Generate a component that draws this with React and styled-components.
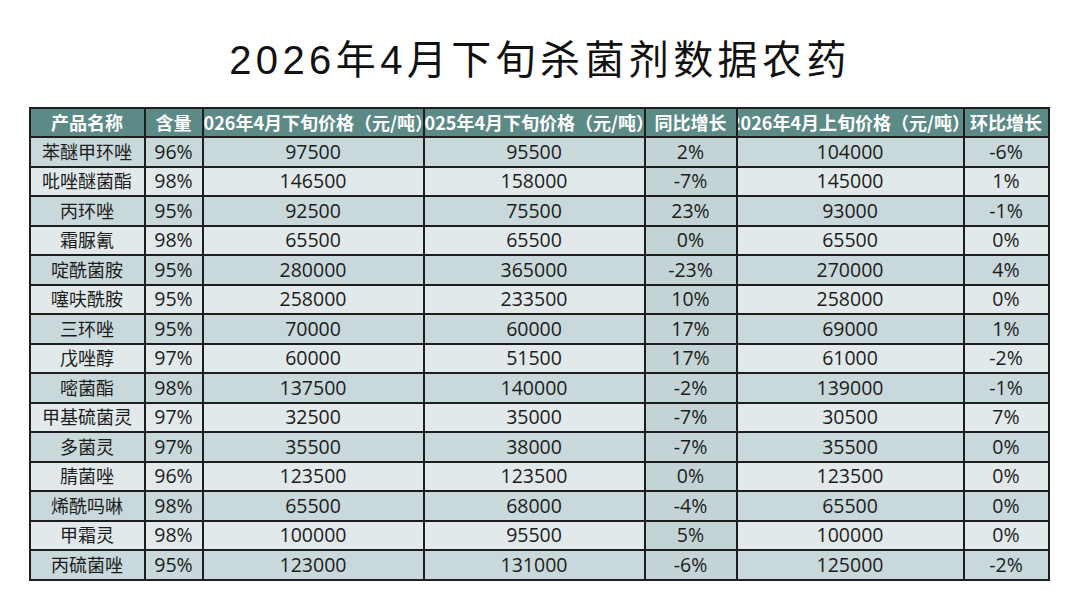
import React from "react";
import styled, { createGlobalStyle } from "styled-components";

const GlobalStyle = createGlobalStyle`
  html, body {
    margin: 0;
    padding: 0;
    background: #ffffff;
  }
  body {
    font-family: "Open Sans", "Noto Sans CJK SC", sans-serif;
    color: #1c1c1c;
  }
`;

const colors = {
  head: "#5c8a86",
  dark: "#c9d8da",
  light: "#e2e9ea",
  accent: "#c4d4d6",
  line: "#1e1e1e",
};

const headers = [
  "产品名称",
  "含量",
  "2026年4月下旬价格（元/吨）",
  "2025年4月下旬价格（元/吨）",
  "同比增长",
  "2026年4月上旬价格（元/吨）",
  "环比增长",
];

const widths = [115, 58, 221, 221, 92, 227, 85];

const rows = [
  ["苯醚甲环唑", "96%", "97500", "95500", "2%", "104000", "-6%"],
  ["吡唑醚菌酯", "98%", "146500", "158000", "-7%", "145000", "1%"],
  ["丙环唑", "95%", "92500", "75500", "23%", "93000", "-1%"],
  ["霜脲氰", "98%", "65500", "65500", "0%", "65500", "0%"],
  ["啶酰菌胺", "95%", "280000", "365000", "-23%", "270000", "4%"],
  ["噻呋酰胺", "95%", "258000", "233500", "10%", "258000", "0%"],
  ["三环唑", "95%", "70000", "60000", "17%", "69000", "1%"],
  ["戊唑醇", "97%", "60000", "51500", "17%", "61000", "-2%"],
  ["嘧菌酯", "98%", "137500", "140000", "-2%", "139000", "-1%"],
  ["甲基硫菌灵", "97%", "32500", "35000", "-7%", "30500", "7%"],
  ["多菌灵", "97%", "35500", "38000", "-7%", "35500", "0%"],
  ["腈菌唑", "96%", "123500", "123500", "0%", "123500", "0%"],
  ["烯酰吗啉", "98%", "65500", "68000", "-4%", "65500", "0%"],
  ["甲霜灵", "98%", "100000", "95500", "5%", "100000", "0%"],
  ["丙硫菌唑", "95%", "123000", "131000", "-6%", "125000", "-2%"],
];

export default function App() {
  return (
    <Page>
      <GlobalStyle />
      <Title>2026年4月下旬杀菌剂数据农药</Title>
      <Table>
        <colgroup>
          {widths.map((w, i) => (
            <col key={i} style={{ width: w }} />
          ))}
        </colgroup>
        <thead>
          <HeadRow>
            {headers.map((h) => (
              <HeadCell key={h}>
                <Clip>{h}</Clip>
              </HeadCell>
            ))}
          </HeadRow>
        </thead>
        <tbody>
          {rows.map((r, i) => (
            <BodyRow key={r[0]}>
              {r.map((v, j) => (
                <Cell
                  key={j}
                  $odd={i % 2 === 0}
                  $accent={j === 4}
                  $name={j === 0}
                >
                  {v}
                </Cell>
              ))}
            </BodyRow>
          ))}
        </tbody>
      </Table>
    </Page>
  );
}

const Page = styled.div`
  width: 1080px;
  height: 607px;
  padding-top: 36px;
  box-sizing: border-box;
  display: flex;
  flex-direction: column;
  align-items: center;
  overflow: hidden;
`;

const Title = styled.h1`
  margin: 0 0 23px 0;
  font-family: "Liberation Sans", "Noto Sans CJK SC", sans-serif;
  font-size: 40px;
  font-weight: 400;
  line-height: 48px;
  letter-spacing: 4.4px;
  color: #111111;
  text-align: center;
`;

const Table = styled.table`
  margin-left: -2px;
  width: 1019px;
  table-layout: fixed;
  border-collapse: collapse;
  border: 2px solid ${colors.line};
`;

const HeadRow = styled.tr`
  height: 29px;
  background: ${colors.head};
`;

const HeadCell = styled.th`
  padding: 0;
  border: 2px solid ${colors.line};
  color: #ffffff;
  font-family: "Noto Sans CJK SC", sans-serif;
  font-size: 18px;
  font-weight: 700;
  overflow: hidden;
`;

const Clip = styled.div`
  display: flex;
  justify-content: center;
  white-space: nowrap;
  overflow: hidden;
  line-height: 25px;
`;

const BodyRow = styled.tr`
  height: 29.5px;
`;

const Cell = styled.td`
  padding: 0;
  border: 2px solid ${colors.line};
  text-align: center;
  font-size: ${(p) => (p.$name ? "18px" : "19.5px")};
  line-height: 24px;
  white-space: nowrap;
  color: #1c1c1c;
  background: ${(p) =>
    p.$accent ? colors.accent : p.$odd ? colors.dark : colors.light};
`;
